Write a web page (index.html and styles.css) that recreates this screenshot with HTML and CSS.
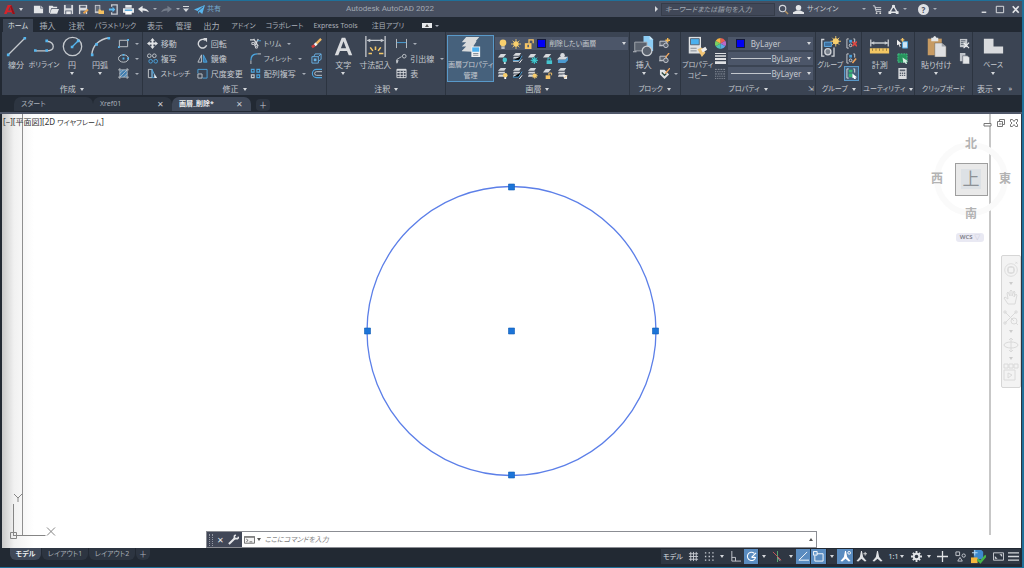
FILE: index.html
```html
<!DOCTYPE html>
<html lang="ja">
<head>
<meta charset="utf-8">
<title>Autodesk AutoCAD 2022</title>
<link rel="stylesheet" href="styles.css">
</head>
<body>
<svg class="sprite" aria-hidden="true">
  <symbol id="sheets" viewBox="0 0 24 24"><path fill="#d9dbdc" d="M7 1h15l-5 6H2zM7 7l12-1-4 6H2zM7 12l9 0-2 5H2z"/><path fill="#d9dbdc" d="M2 17.500l3-2 9 .5v2z"/></symbol>
  <symbol id="layers3" viewBox="0 0 12 12"><path fill="#d5d8dc" d="M4 0h6L8 3H1zM2 4h7L8 6H1zM2 7h7L7 9.500H1z"/></symbol>
  <symbol id="onelayer" viewBox="0 0 12 12"><path fill="#d5d8dc" d="M4 1h6L7 5H1z"/></symbol>
  <symbol id="blk" viewBox="0 0 12 12"><path fill="#59616e" stroke="#c9cdd2" d="M1 3.500h7v4.500H1z"/><circle cx="7.500" cy="8" r="2.500" fill="#59616e" stroke="#c9cdd2"/><path stroke="#c9cdd2" d="M0 8.500h4"/></symbol>
  <symbol id="annot" viewBox="0 0 12 12"><path fill="currentColor" d="M5.500 0h1l1.300 6.500L11.500 11l-2 .5L6 8.500l-3.500 3-2-.5 3.700-4.500z"/></symbol>
  <symbol id="group" viewBox="0 0 24 24"><path fill="none" stroke="#d0d3d8" stroke-width="1.500" d="M5 4H2v19h3M13 23h3V13"/><path fill="#3d6f9f" stroke="#62b0ea" d="M5 7h8v5H5z"/><circle cx="9" cy="18" r="3.500" fill="#777f8a" stroke="#d0d3d8" stroke-width="1.500"/></symbol>
  <symbol id="groupsm" viewBox="0 0 12 12"><path fill="none" stroke="#d0d3d8" d="M3 1H1v10h2M8 1h1.500v4"/><path fill="#48a0de" d="M3.500 2h3v3h-3z"/><circle cx="5" cy="8" r="1.500" fill="none" stroke="#d0d3d8"/></symbol>
</svg>

<div class="app">
<header class="titlebar">
  <div class="quick">
    <button aria-label="アプリケーション メニュー" class="logo"><svg viewBox="0 0 12 12"><path fill="#d5242b" fill-rule="evenodd" d="M4 1h4l4 10H9L8.300 9H3.700L3 11H0zM6 3 4.600 7h2.800z"/><path fill="#8f141c" d="M8 1 12 11H9.500L6.800 3z"/></svg><i class="arr"></i></button>
    <button aria-label="新規"><svg viewBox="0 0 12 12"><path fill="#e3e5e8" d="M1 2h7v3h3v5H1z"/><path fill="#b6bac1" d="M8.500 1.500 11.500 4.500h-3z"/></svg></button>
    <button aria-label="開く"><svg viewBox="0 0 12 12"><path fill="#e3e5e8" d="M1 10V2h4l1 1h4v1.500H3.500L2 9.500zM4 5.500h8L10 10.500H2z"/></svg></button>
    <button aria-label="保存"><svg viewBox="0 0 12 12"><path fill="#d9dbdf" d="M1 1h10v10H1z"/><path fill="#596273" d="M3 1h6v3.500H3zM2.500 7h7v4h-7z"/><path fill="#e8e9eb" d="M3.500 8h5v3h-5z"/></svg></button>
    <button aria-label="名前を付けて保存"><svg viewBox="0 0 12 12"><path fill="#d9dbdf" d="M1 1h9v10H1z"/><path fill="#596273" d="M2.500 2h6v2h-6zM2.500 7h6v4h-6z"/><path stroke="#e7a24e" stroke-width="2" d="m6 10 5-4"/></svg></button>
    <button aria-label="Web から開く"><svg viewBox="0 0 12 12"><path fill="#c7cad0" d="M2 1h6v9H2z"/><path fill="#636b79" d="M3 2h4v6H3z"/><path fill="#f3c061" d="M6 6h2l1 1h3v4H6z"/></svg></button>
    <button aria-label="モバイルに保存"><svg viewBox="0 0 12 12"><path fill="none" stroke="#c7cad0" stroke-width="1.500" d="M4 3V1h6v10H4V9"/><path fill="#5bb8f0" d="M1 5h4V3l3 3-3 3V7H1z"/></svg></button>
    <button aria-label="印刷"><svg viewBox="0 0 12 12"><path fill="#e7e9eb" d="M2.500 1h7v3h-7zM0 4.500h12v5H0z"/><path fill="#4da3d9" d="M2 6h8v1.500H2z"/><path fill="#fff" d="M2.500 8h7v3.500h-7z"/></svg></button>
    <button aria-label="元に戻す"><svg viewBox="0 0 12 12"><path fill="#e7e9eb" d="M0 5.500 5 2v2.500q5 0 7 4.500-3-2-7-2v2.500z"/></svg></button>
    <button aria-label="元に戻す履歴" class="narrow"><i class="arr tiny"></i></button>
    <button aria-label="やり直し"><svg viewBox="0 0 12 12"><path fill="#747c8a" d="M12 5.500 7 2v2.500q-5 0-7 4.500 3-2 7-2v2.500z"/></svg></button>
    <button aria-label="やり直し履歴" class="narrow"><i class="arr tiny"></i></button>
    <button aria-label="クイック アクセスのカスタマイズ" class="narrow custom"><svg viewBox="0 0 6 6"><path fill="#d5d8dc" d="M0 0h6v1H0zM0 2.500h6L3 6z"/></svg></button>
    <button class="share"><svg viewBox="0 0 12 12"><path fill="#58b4ec" d="M0 6 12 1 9 11 6 8.500 4.500 11V8z"/><path stroke="#474f60" d="m4 8 6-5"/></svg><span>共有</span></button>
  </div>
  <h1 class="apptitle">Autodesk AutoCAD 2022</h1>
  <div class="account">
    <i class="arr right"></i>
    <input class="search" aria-label="検索" placeholder="キーワードまたは語句を入力">
    <button aria-label="検索実行"><svg viewBox="0 0 12 12"><circle cx="5" cy="5" r="3.500" fill="none" stroke="#d4d7dc" stroke-width="1.200"/><path stroke="#b99563" stroke-width="1.500" d="m8 8 3 3"/></svg></button>
    <button class="signin"><svg viewBox="0 0 12 12"><circle cx="6" cy="4" r="3" fill="#e3e5e8"/><path fill="#e3e5e8" d="M0 11V9l4-2h4l4 2v2z"/></svg><span>サインイン</span><i class="arr tiny"></i></button>
    <button aria-label="ストア"><svg viewBox="0 0 12 12"><path fill="none" stroke="#d4d7dc" d="M1 2h2l1.500 6H10M3 4h7M4 6h6"/><circle cx="5" cy="10" r="1" fill="#ddd"/><circle cx="9" cy="10" r="1" fill="#ddd"/></svg></button>
    <button class="pair" aria-label="アプリ"><svg viewBox="0 0 12 12"><path fill="none" stroke="#e3e5e8" stroke-width="1.500" d="M6 2 2 9h8z"/><path fill="#e3e5e8" d="M4.500 1h3v3h-3zM.500 8h3v3h-3zM8.500 8h3v3h-3z"/></svg><i class="arr tiny"></i></button>
    <button class="pair help" aria-label="ヘルプ"><b>?</b><i class="arr tiny"></i></button>
    <span class="winbtns">
      <button aria-label="最小化"><svg viewBox="0 0 12 12"><path stroke="#e3e5e8" stroke-width="1.500" d="M4 9h5"/></svg></button>
      <button aria-label="最大化"><svg viewBox="0 0 12 12"><path fill="none" stroke="#e3e5e8" d="M2.500 2.500h8v7h-8z"/></svg></button>
      <button aria-label="閉じる"><svg viewBox="0 0 12 12"><path stroke="#e3e5e8" stroke-width="1.800" d="m3 2.500 6.500 7m0-7L3 9.500"/></svg></button>
    </span>
  </div>
</header>

<nav class="tabs" aria-label="リボン タブ">
  <button class="on kana">ホーム</button><button>挿入</button><button>注釈</button><button class="kana">パラメトリック</button><button>表示</button><button>管理</button><button>出力</button><button class="kana">アドイン</button><button class="kana">コラボレート</button><button class="latin">Express Tools</button><button class="kana">注目アプリ</button><button aria-label="リボンを最小化"><i class="mini"><i class="arr up"></i></i><i class="arr tiny"></i></button>
</nav>

<main class="ribbon">
  <section class="panel draw">
    <div class="body">
      <button class="big"><svg viewBox="0 0 24 24"><path stroke="#c5c9ce" stroke-width="1.500" d="M2 22 22 2"/><path fill="#55b6ef" d="M1 20h3v3H1zM20 1h3v3h-3z"/></svg><span>線分</span></button>
      <button class="big"><svg viewBox="0 0 24 24"><path fill="none" stroke="#c5c9ce" stroke-width="1.500" d="M2 17h12q8 0 8-5t-7-6"/><path fill="#55b6ef" d="M0 15h3v3H0zM13 15h3v3h-3zM13 4h3v3h-3z"/></svg><span class="kana">ポリライン</span></button>
      <button class="big"><svg viewBox="0 0 24 24"><circle cx="12" cy="12" r="10.500" fill="none" stroke="#c5c9ce" stroke-width="1.500"/><path stroke="#55b6ef" stroke-width="1.500" d="m12 12 6-6"/><path fill="#55b6ef" d="M10 11h3v3h-3zM17 4h3v3h-3z"/></svg><span>円</span><i class="arr"></i></button>
      <button class="big"><svg viewBox="0 0 24 24"><path fill="none" stroke="#c5c9ce" stroke-width="1.500" d="M2 21Q4 5 22 2"/><path fill="#55b6ef" d="M1 20h3v3H1zM6 8h3v3H6zM20 1h3v3h-3z"/></svg><span>円弧</span><i class="arr"></i></button>
      <div class="rows">
        <button aria-label="長方形"><svg viewBox="0 0 12 12"><path fill="none" stroke="#c5c9ce" d="M1.500 2.500h9v7h-9z"/><path fill="#55b6ef" d="M10 1h2v2h-2zM0 9h2v2H0z"/></svg><i class="arr tiny"></i></button>
        <button aria-label="楕円"><svg viewBox="0 0 12 12"><ellipse cx="6" cy="6" rx="5.500" ry="4" fill="none" stroke="#c5c9ce"/><path fill="#55b6ef" d="M5 5h2v2H5zM10 5h2v2h-2zM5 1h2v2H5z"/></svg><i class="arr tiny"></i></button>
        <button aria-label="ハッチング"><svg viewBox="0 0 12 12"><path fill="#3f7db0" d="M2 2h8v8H2z"/><path stroke="#c5c9ce" stroke-width=".8" d="M2 0v12M10 0v12M0 2h12M0 10h12M2 6l4-4M2 10l8-8M6 10l4-4"/></svg><i class="arr tiny"></i></button>
      </div>
    </div>
    <h2>作成<i class="arr"></i></h2>
  </section>

  <section class="panel modify">
    <div class="body cols">
      <button><svg viewBox="0 0 12 12"><path fill="#e0e2e5" d="m6 0 2.500 3H7v2h2V3.500L12 6 9 8.500V7H7v2h1.500L6 12 3.500 9H5V7H3v1.500L0 6l3-2.500V5h2V3H3.500z"/></svg><span>移動</span></button>
      <button><svg viewBox="0 0 12 12"><path fill="none" stroke="#d5d8dc" stroke-width="1.500" d="M9 2.500A4.700 4.700 0 1 0 10.500 8"/><path fill="#d5d8dc" d="M6.500 0H11v4.500z"/></svg><span>回転</span></button>
      <button><svg viewBox="0 0 12 12"><path stroke="#d5d8dc" stroke-width="1.400" d="m4 1 5 8M9 1 5 9M0 2h4"/><path fill="none" stroke="#d5d8dc" d="M6 9h2v2H6zM2 5h3v2H2z"/><path stroke="#4ba5df" d="M8 3h4"/></svg><span class="kana">トリム</span><i class="arr tiny"></i></button>
      <button aria-label="削除"><svg viewBox="0 0 12 12"><path stroke="#efb965" stroke-width="2.500" d="m5 7 6-6"/><path stroke="#f5f5f5" stroke-width="3" d="m4 8 2-2"/><path stroke="#d6403c" stroke-width="3" d="m1 10 3-2"/></svg></button>
      <button><svg viewBox="0 0 12 12"><g fill="none" stroke="#c5c9ce"><circle cx="2.500" cy="3" r="2"/><circle cx="8" cy="3" r="2"/></g><g fill="none" stroke="#4ba5df"><circle cx="4" cy="9" r="2"/><circle cx="9.500" cy="9" r="2"/></g></svg><span>複写</span></button>
      <button><svg viewBox="0 0 12 12"><path fill="none" stroke="#c5c9ce" d="M5 2v8H1z"/><path fill="#3b78a8" stroke="#4ba5df" d="M7 2v8h4z"/></svg><span>鏡像</span></button>
      <button><svg viewBox="0 0 12 12"><path fill="none" stroke="#c5c9ce" d="M1 12V8M8 1h4"/><path fill="none" stroke="#4ba5df" stroke-width="1.400" d="M1 8q0-7 7-7"/></svg><span class="kana">フィレット</span><i class="arr tiny"></i></button>
      <button aria-label="分解"><svg viewBox="0 0 12 12"><path fill="none" stroke="#6ab4e8" d="M1 4h7v7H1zM3 4l1.500-3H11v6L8 9M8 4l3-3"/><path fill="#6ab4e8" d="M3 6h3v3H3z"/></svg></button>
      <button><svg viewBox="0 0 12 12"><path fill="none" stroke="#c5c9ce" d="M1.500 1.500h4v9h-4z"/><path fill="none" stroke="#4ba5df" d="M5.500 1.500 8 7v3.500H5.500z"/><path fill="#e6e7e9" d="m8 6 3 5H8z"/></svg><span class="kana">ストレッチ</span></button>
      <button><svg viewBox="0 0 12 12"><path fill="none" stroke="#4ba5df" d="M1 6V1.500h10V11H6"/><path fill="none" stroke="#c5c9ce" d="M1 6.500h4.500V11H1z"/></svg><span>尺度変更</span></button>
      <button><svg viewBox="0 0 12 12"><g fill="none" stroke="#4ba5df" stroke-width="1.200"><path d="M1.500 1.500h3v3h-3zM7.500 1.500h3v3h-3zM7.500 7.500h3v3h-3z"/><path stroke="#c5c9ce" d="M1.500 7.500h3v3h-3z"/></g></svg><span>配列複写</span><i class="arr tiny"></i></button>
      <button aria-label="オフセット"><svg viewBox="0 0 12 12"><path fill="none" stroke="#4ba5df" stroke-width="1.200" d="M12 1.500H6a4.500 4.500 0 0 0 0 9h6"/><path fill="none" stroke="#c5c9ce" d="M12 4H6a2 2 0 0 0 0 4h6"/></svg></button>
    </div>
    <h2>修正<i class="arr"></i></h2>
  </section>

  <section class="panel annotate">
    <div class="body">
      <button class="big"><svg viewBox="0 0 24 24"><path fill="#d9dbde" fill-rule="evenodd" d="M10 2h4l8 20h-4l-2-5H8l-2 5H2zM9 14h6l-3-8z"/></svg><span>文字</span><i class="arr"></i></button>
      <button class="big wide"><svg viewBox="0 0 24 24"><path stroke="#c5c9ce" stroke-width="1.500" d="M1 0v24M23 0v24M3 5h18"/><path fill="#c5c9ce" d="m2 5 4-2v4zM22 5l-4-2v4z"/><path stroke="#f2c667" stroke-width="1.800" d="M12 12v4M6 13l3 4M18 13l-3 4M4 20h4M16 20h5"/></svg><span>寸法記入</span></button>
      <div class="rows">
        <button aria-label="長さ寸法"><svg viewBox="0 0 12 12"><path stroke="#c5c9ce" d="M.500 1v10M11.500 1v10"/><path stroke="#4ba5df" d="M1 5h10"/></svg><i class="arr tiny"></i></button>
        <button><svg viewBox="0 0 12 12"><path fill="none" stroke="#c5c9ce" d="M1 11V7l5-3"/><circle cx="9" cy="3.500" r="2" fill="none" stroke="#c5c9ce"/><path fill="#c5c9ce" d="M0 8h3l-2 4z"/></svg><span>引出線</span><i class="arr tiny"></i></button>
        <button><svg viewBox="0 0 12 12"><path fill="#3b4453" stroke="#d5d8dc" d="M1 1.500h10v9H1zM1 5h10M1 8h10M4.500 3v8M8 3v8"/><path fill="#d5d8dc" d="M1 1h10v2H1z"/></svg><span>表</span></button>
      </div>
    </div>
    <h2>注釈<i class="arr"></i></h2>
  </section>

  <section class="panel layerpanel">
    <div class="body">
      <button class="big active"><svg viewBox="0 0 24 24"><use href="#sheets"/><path fill="#f1f2f3" d="M13 12h10v12H13z"/><path fill="#4bb0ef" d="M14 13h8v5h-8z"/><path stroke="#7b828b" d="M15 20h6m-6 2h6"/></svg><span class="kana">画層プロパティ<br>管理</span></button>
      <div class="layerbox">
        <div class="combo">
          <svg viewBox="0 0 12 12"><circle cx="6" cy="4.500" r="4" fill="#f8cf6e"/><path fill="#f8cf6e" d="M4 7h4v2H4z"/><path fill="#b8bcc4" d="M4 9h4v3H4z"/></svg>
          <svg viewBox="0 0 12 12"><circle cx="6" cy="6" r="3.200" fill="#f8cf6e"/><path stroke="#f8cf6e" d="M6 0v12M0 6h12M2 2l8 8M10 2l-8 8"/></svg>
          <svg viewBox="0 0 12 12"><path fill="#f8c666" d="M1 5h8v7H1z"/><path fill="none" stroke="#f8c666" stroke-width="1.500" d="M6 5V1h5v4"/><path fill="#59616e" d="M4 7h2v3H4z"/></svg>
          <i class="swatch"></i>
          <select aria-label="現在の画層" class="kana"><option>削除したい画層</option></select><i class="arr"></i>
        </div>
        <div class="icongrid">
          <button aria-label="非表示"><svg viewBox="0 0 12 12"><use href="#onelayer"/><circle cx="8.500" cy="7.500" r="2.500" fill="#45c5cf"/><path fill="#d6e9ea" d="M7.500 10h2v2h-2z"/></svg></button>
          <button aria-label="選択表示"><svg viewBox="0 0 12 12"><use href="#layers3"/><path stroke="#4ba5df" d="M1 8h7l3-5"/><path stroke="#fff" d="m8 11 3-4"/></svg></button>
          <button aria-label="フリーズ"><svg viewBox="0 0 12 12"><use href="#onelayer"/><circle cx="8" cy="8" r="3" fill="#278d93"/><path stroke="#46cfd5" d="M8 4v8M4 8h8M5 5l6 6M11 5l-6 6"/></svg></button>
          <button aria-label="ロック"><svg viewBox="0 0 12 12"><use href="#onelayer"/><path fill="#45c5cf" d="M5 8h6v4H5z"/><path fill="none" stroke="#45c5cf" d="M6.500 8V5.500h3V8"/></svg></button>
          <button aria-label="現在層に設定"><svg viewBox="0 0 12 12"><path fill="#4b9ad0" d="M1 7h8l3-3v4l-3 3H1z"/><path fill="#d5d8dc" d="M3 4h9L9 7H0z"/><circle cx="6" cy="2.500" r="2.500" fill="#d9dbde"/></svg></button>
          <button aria-label="全画層表示"><svg viewBox="0 0 12 12"><use href="#layers3"/><circle cx="9" cy="8" r="2.500" fill="#f8cf6e"/><path fill="#fff" d="M8 10h2v2H8z"/></svg></button>
          <button aria-label="選択表示解除"><svg viewBox="0 0 12 12"><use href="#layers3"/><path stroke="#4ba5df" d="M1 10h6l4-6"/><path stroke="#fff" d="m8 12 3-4"/></svg></button>
          <button aria-label="フリーズ解除"><svg viewBox="0 0 12 12"><use href="#layers3"/><circle cx="8.500" cy="8.500" r="2.200" fill="#f8cf6e"/><path stroke="#f8cf6e" stroke-width=".7" d="M8.500 5v7M5 8.500h7M6 6l5 5M11 6l-5 5"/></svg></button>
          <button aria-label="ロック解除"><svg viewBox="0 0 12 12"><use href="#onelayer"/><path fill="#f8c666" d="M4 8h5v4H4z"/><path fill="none" stroke="#f8c666" d="M7.500 8V5.500h3V8"/></svg></button>
          <button aria-label="画層一致"><svg viewBox="0 0 12 12"><use href="#layers3"/><path fill="#eee" d="m6 7 5 1v4H8z"/><path stroke="#efb965" d="m8 11 3-3"/></svg></button>
        </div>
      </div>
    </div>
    <h2>画層<i class="arr"></i></h2>
  </section>

  <section class="panel block">
    <div class="body">
      <button class="big"><svg viewBox="0 0 24 24"><path fill="#8dcdf5" d="M12 0h7l4 4v13H12z"/><path fill="#cfe9fa" d="M19 0v4h4z"/><path fill="#5a626e" stroke="#a9aeb5" d="M2 7h14v10H2z"/><circle cx="16" cy="17" r="5.500" fill="#5a626e" stroke="#c9cdd2" stroke-width="1.500"/><path stroke="#c9cdd2" d="M0 18h4"/></svg><span>挿入</span><i class="arr"></i></button>
      <div class="rows">
        <button aria-label="ブロック作成"><svg viewBox="0 0 12 12"><use href="#blk"/><path stroke="#f4ba56" stroke-width="1.500" d="M9.500 0v5M7 2.500h5"/></svg></button>
        <button aria-label="ブロック編集"><svg viewBox="0 0 12 12"><use href="#blk"/><path stroke="#efa55c" stroke-width="1.500" d="m7 5 4-5"/></svg></button>
        <button aria-label="属性編集"><svg viewBox="0 0 12 12"><path fill="#e0e2e5" d="M1 2h5l5 5-5 5-5-5z"/><path fill="none" stroke="#2e4a40" stroke-width="1.500" d="m3 5 3 3 2-2"/><path stroke="#efa55c" stroke-width="1.500" d="m7 6 5-6"/></svg><i class="arr tiny"></i></button>
      </div>
    </div>
    <h2><span class="kana">ブロック</span><i class="arr"></i></h2>
  </section>

  <section class="panel props">
    <div class="body">
      <button class="big"><svg viewBox="0 0 24 24"><path fill="#dfe1e3" d="M2 1h14v19H2z"/><path fill="#4bb0ef" stroke="#555d69" d="M4 3h10v7H4z"/><path stroke="#7b828b" d="M4 14h7m-7 3h7"/><path fill="#f0c474" d="m12 15 5-2 4 6-4 5z"/><path stroke="#eee" stroke-width="4" d="m17 17 5-3"/></svg><span class="kana">プロパティ<br>コピー</span></button>
      <div class="proprows">
        <svg viewBox="0 0 12 12"><path fill="#ec5d4f" d="M6 6V0a6 6 0 0 1 5.200 3z"/><path fill="#b869c7" d="m6 6 5.200-3a6 6 0 0 1 0 6z"/><path fill="#5aa9e6" d="m6 6 5.200 3A6 6 0 0 1 6 12z"/><path fill="#4cc2b4" d="M6 6v6A6 6 0 0 1 .800 9z"/><path fill="#79cf60" d="M6 6 .800 9a6 6 0 0 1 0-6z"/><path fill="#f6b545" d="M6 6 .800 3A6 6 0 0 1 6 0z"/></svg>
        <label class="combo"><i class="swatch"></i><select aria-label="色"><option>ByLayer</option></select><i class="arr"></i></label>
        <svg viewBox="0 0 12 12"><path fill="#dfe1e4" d="M0 0h12v1H0zM0 2.500h12v1.500H0zM0 5.500h12v2H0zM0 9h12v3H0z"/></svg>
        <label class="combo"><i class="rule"></i><select aria-label="線の太さ"><option>ByLayer</option></select><i class="arr"></i></label>
        <svg viewBox="0 0 12 12"><path stroke="#8f96a1" stroke-dasharray="2 1" d="M0 1.500h12M0 6.500h12"/><path stroke="#8f96a1" stroke-dasharray="1 1" d="M0 4h12M0 9h12M0 11.500h12"/></svg>
        <label class="combo"><i class="rule"></i><select aria-label="線種"><option>ByLayer</option></select><i class="arr"></i></label>
      </div>
    </div>
    <h2><span class="kana">プロパティ</span><i class="arr"></i><button class="launch" aria-label="プロパティ パレット">⇲</button></h2>
  </section>

  <section class="panel grp">
    <div class="body">
      <button class="big"><svg viewBox="0 0 24 24"><use href="#group"/><circle cx="18" cy="6" r="3.500" fill="#f8cf6e"/><path stroke="#f8cf6e" d="M18 0v12M12 6h12M14 2l8 8M22 2l-8 8"/></svg><span class="kana">グループ</span></button>
      <div class="rows">
        <button aria-label="グループ解除"><svg viewBox="0 0 12 12"><use href="#groupsm"/><path stroke="#e14842" stroke-width="1.800" d="m7 4 5 5m0-5-5 5"/></svg></button>
        <button aria-label="グループ編集"><svg viewBox="0 0 12 12"><use href="#groupsm"/><path stroke="#efa55c" stroke-width="1.800" d="m7 11 4-5"/></svg></button>
        <button aria-label="グループ選択" class="active"><svg viewBox="0 0 12 12"><path fill="none" stroke="#e0e2e5" d="M3 1H1v10h2M8 1h1.500v4"/><path fill="#37b677" d="M3 2h4v3H3zM3 6h4v4H3z"/><path fill="#fff" d="m7 6 5 4-2 .5 1 1.500H9L8 10.500 7 11z"/></svg></button>
      </div>
    </div>
    <h2><span class="kana">グループ</span><i class="arr"></i></h2>
  </section>

  <section class="panel util">
    <div class="body">
      <button class="big"><svg viewBox="0 0 24 24"><path stroke="#c5c9ce" stroke-width="1.500" d="M2 4v8M22 4v8M3 8h18"/><path fill="#c5c9ce" d="m2 8 4-2v4zM22 8l-4-2v4z"/><path fill="#f3c763" d="M1 14h22v6H1z"/><path stroke="#967b3e" d="M4 14v3M8 14v3M12 14v3M16 14v3M20 14v3"/></svg><span>計測</span><i class="arr"></i></button>
      <div class="rows">
        <button aria-label="クイック選択"><svg viewBox="0 0 12 12"><path fill="#cfe5f5" stroke="#4ba5df" d="M6 4h5.500v7H6z"/><path fill="#eee" d="m0 2 5 4-2 .5 1 3-1 .5-1-3-2 1z"/><path stroke="#f4c466" stroke-width="1.500" d="M6 0v4M4 2h4"/></svg></button>
        <button aria-label="すべて選択"><svg viewBox="0 0 12 12"><path fill="#26935c" stroke="#45c98a" stroke-dasharray="2 1" d="M1 1h10v9H1z"/><path fill="#d8eee3" d="m6 5 6 4-2 .5 1 2.500H9.500L8.500 10 7 11z"/></svg></button>
        <button aria-label="計算機"><svg viewBox="0 0 12 12"><path fill="#d9dbde" d="M1.500 0h9v12h-9z"/><path fill="#59616e" d="M3 1.500h6v2H3zM3 5h1.500v1.500H3zM5.300 5h1.500v1.500H5.300zM7.600 5H9v1.500H7.600zM3 7.300h1.500v1.500H3zM5.300 7.300h1.500v1.500H5.300zM7.600 7.300H9v1.500H7.600z"/></svg></button>
      </div>
    </div>
    <h2><span class="kana">ユーティリティ</span><i class="arr"></i></h2>
  </section>

  <section class="panel clip">
    <div class="body">
      <button class="big"><svg viewBox="0 0 24 24"><path fill="#c79b63" d="M2 3h16v19H2z"/><path fill="#e3e5e7" d="M6 2h2q2-4 4 0h2v4H6z"/><path fill="#dedfe1" stroke="#5b5346" stroke-width=".5" d="M10 8h8l5 4v12H10z"/><path fill="#9da2a9" d="M18 8v4h5z"/></svg><span>貼り付け</span><i class="arr"></i></button>
      <div class="rows">
        <button aria-label="切り取り"><svg viewBox="0 0 12 12"><path fill="#c3c7cc" d="M1 1h8v9H1z"/><path stroke="#59616e" d="M2 3h5M2 5h4M2 7h3"/><path stroke="#f0f1f2" stroke-width="1.200" d="m5 5 6 6m0-6-6 6"/></svg></button>
        <button aria-label="コピー"><svg viewBox="0 0 12 12"><path fill="#bfc3c9" d="M1 0h6v9H1z"/><path fill="#e3e5e7" stroke="#59616e" stroke-width=".7" d="M4 3h5l2.500 2v7H4z"/></svg></button>
      </div>
    </div>
    <h2><span class="kana">クリップボード</span></h2>
  </section>

  <section class="panel view">
    <div class="body">
      <button class="big"><svg viewBox="0 0 24 24"><path fill="#d9dbde" d="M1 3h11v9h11v8H1z"/></svg><span class="kana">ベース</span><i class="arr"></i></button>
    </div>
    <h2>表示<i class="arr"></i><button class="launch" aria-label="表示設定">»</button></h2>
  </section>
</main>

<nav class="files" aria-label="ファイル タブ">
  <div class="file"><a href="#start">スタート</a></div>
  <div class="file"><a href="#xref">Xref01</a><button aria-label="Xref01 を閉じる">✕</button></div>
  <div class="file on"><a href="#layer-del">画層_削除*</a><button aria-label="画層_削除 を閉じる">✕</button></div>
  <button class="add" aria-label="新規タブ">＋</button>
</nav>

<section class="canvas">
  <svg class="drawing" viewBox="0 0 1020 434" aria-label="図面">
    <path stroke="#8f8f8f" d="M20.500 0v421M988 0v421"/>
    <circle cx="509.500" cy="217" r="144.500" fill="none" stroke="#5c7fe8" stroke-width="1.300"/>
    <g fill="#1c74d8" stroke="#0f5db5" stroke-width=".6"><path d="M506.500 70h6v6h-6zM362.500 214h6v6h-6zM506.500 214h6v6h-6zM650.500 214h6v6h-6zM506.500 358h6v6h-6z"/></g>
    <g fill="none" stroke="#858585"><path d="M8.500 418.500h6v6h-6zM11.500 422v-32M11.500 421.500h32M12 380l4 4 4-4M16 384v4M45 413.500l8 8m0-8-8 8"/></g>
  </svg>
  <div class="viewlabel">[−][平面図][2D <span class="kana">ワイヤフレーム</span>]</div>
  <div class="viewbtns">
    <button aria-label="最小化"><svg viewBox="0 0 10 10"><path fill="#fff" stroke="#777" d="M1 5.500h7v2.500H1z"/></svg></button>
    <button aria-label="復元"><svg viewBox="0 0 10 10"><path fill="none" stroke="#777" d="M1.500 3.500h5v5h-5zM3.500 3V1.500h5v5H7M3 6h2.500"/></svg></button>
    <button aria-label="閉じる"><svg viewBox="0 0 10 10"><path fill="none" stroke="#777" d="M1.500 1.500h2L5 3.500l1.500-2h2v2L7 5l1.500 1.500v2h-2L5 6.500l-1.500 2h-2v-2L3 5 1.500 3.500z"/></svg></button>
  </div>
  <div class="cube">
    <i class="ring"></i>
    <button class="n">北</button><button class="w">西</button><button class="face"><span>上</span></button><button class="e">東</button><button class="s">南</button>
  </div>
  <button class="wcs">WCS <span>▽</span></button>
  <div class="navbar">
    <button aria-label="ホイール"><svg viewBox="0 0 16 20"><circle cx="8" cy="10" r="7"/><path d="M5 7h6v6H5z"/><circle cx="8" cy="10" r="4"/><path d="M13 1l2 2m0-2-2 2"/></svg></button><i class="arr"></i>
    <button aria-label="画面移動"><svg viewBox="0 0 16 16"><path d="M5 15 1 9l1-1 3 2-1-6 1-1 2 4V2l1-1 1 1v5l2-5 1 1-1 5 2-3 1 1-2 9z"/></svg></button>
    <button aria-label="ズーム"><svg viewBox="0 0 16 16"><path d="m2 2 9 9M13 2 2 13M1 1h2v2H1zM12 1h2v2h-2zM1 12h2v2H1zM13 13l2 2"/><circle cx="11" cy="11" r="3"/></svg></button><i class="arr"></i>
    <button aria-label="オービット"><svg viewBox="0 0 16 16"><path d="M8 1v14M6 3l2-2 2 2M6 13l2 2 2-2"/><ellipse cx="8" cy="8" rx="7" ry="3"/></svg></button><i class="arr"></i>
    <button aria-label="ショーモーション"><svg viewBox="0 0 16 18"><path d="M1 1h4v4H1zM6 1h4v4H6zM11 1h4v4h-4zM1 7h11v10H1zM5 10l4 2-4 3z"/></svg></button>
  </div>
  <form class="command">
    <div class="grip"><i class="dots"></i><button type="button" aria-label="閉じる">✕</button><button type="button" aria-label="カスタマイズ"><svg viewBox="0 0 12 12"><path stroke="#e6e7ea" stroke-width="2.200" d="m1 11 7-7"/><path fill="none" stroke="#e6e7ea" stroke-width="1.800" d="M7 1.500v3.500h4M7 2l1.500-1M11 5l.5-2"/></svg></button></div>
    <button type="button" class="prompt" aria-label="最近使用したコマンド"><svg viewBox="0 0 12 10"><path fill="#f5f5f5" stroke="#666" d="M.500 1.500h11v7H.500zM2.500 4l2 1.500-2 1.500M6 7h3"/><path fill="#777" d="M0 1h12v1.500H0z"/></svg><i class="arr"></i></button>
    <input class="kana" aria-label="コマンド" placeholder="ここにコマンドを入力">
    <button type="button" class="expand" aria-label="履歴"><i class="arr up"></i></button>
  </form>
</section>

<footer class="status">
  <nav class="layouts"><button class="on kana">モデル</button><button class="kana">レイアウト1</button><button class="kana">レイアウト2</button><button class="plus" aria-label="新規レイアウト">＋</button></nav>
  <div class="modes">
    <button class="kana">モデル</button>
    <button aria-label="グリッド"><svg viewBox="0 0 12 12"><path stroke="#c9cdd3" d="M3 1v10M6 1v10M9 1v10M1 3h10M1 6h10M1 9h10"/></svg></button>
    <button aria-label="スナップ"><svg viewBox="0 0 12 12"><path stroke="#c9cdd3" stroke-width="1.500" stroke-dasharray="1.500 2.500" d="M1 2h11M1 6h11M1 10h11"/></svg></button>
    <button aria-label="スナップ設定"><i class="arr"></i></button>
    <button aria-label="直交"><svg viewBox="0 0 12 12"><path fill="none" stroke="#c9cdd3" d="M2 0v11h10M2 7h4v4"/></svg></button>
    <button aria-label="極トラッキング" class="hl"><svg viewBox="0 0 12 12"><path fill="none" stroke="#fff" stroke-width="1.200" d="M9 2.500a4.500 4.500 0 1 0 1.500 4M6 7l5-5M6 7h4"/></svg></button>
    <button aria-label="極トラッキング設定"><i class="arr"></i></button>
    <button aria-label="アイソメ"><svg viewBox="0 0 12 12"><path stroke="#58af72" d="M6 0v12"/><path stroke="#cf5758" d="m1 1 9 9"/><path stroke="#aaa" d="m6 7 3 4"/></svg></button>
    <button aria-label="アイソメ設定"><i class="arr"></i></button>
    <button aria-label="オブジェクト スナップ トラッキング" class="hl"><svg viewBox="0 0 12 12"><path fill="none" stroke="#fff" d="M10 1 1 10h11"/></svg></button>
    <button aria-label="オブジェクト スナップ" class="hl"><svg viewBox="0 0 12 12"><path fill="none" stroke="#fff" d="M3 3h8v8H2V5"/><path fill="#6c9ed0" stroke="#fff" d="M.500.500h4v4h-4z"/></svg></button>
    <button aria-label="スナップ種類"><i class="arr"></i></button>
    <button aria-label="注釈表示" class="hl"><svg viewBox="0 0 12 12"><use href="#annot"/><circle cx="10" cy="2" r="1.500" fill="none" stroke="#fff"/></svg></button>
    <button aria-label="自動尺度"><svg viewBox="0 0 12 12"><use href="#annot"/><path stroke="#ddd" d="M10 1v4M8 3h4"/></svg></button>
    <button aria-label="注釈"><svg viewBox="0 0 12 12"><use href="#annot"/></svg></button>
    <button class="latin">1:1<i class="arr"></i></button>
    <button aria-label="ワークスペース"><svg viewBox="0 0 12 12"><circle cx="6" cy="6" r="3" fill="none" stroke="#e1e3e6" stroke-width="2"/><path stroke="#e1e3e6" stroke-width="2" d="M6 0v3M6 9v3M0 6h3M9 6h3M2 2l2 2M8 8l2 2M10 2 8 4M4 8l-2 2"/></svg></button>
    <button aria-label="ワークスペース設定"><i class="arr"></i></button>
    <button aria-label="注釈モニター"><svg viewBox="0 0 12 12"><path stroke="#e1e3e6" stroke-width="1.400" d="M6 0v12M0 6h12"/></svg></button>
    <button aria-label="選択表示"><svg viewBox="0 0 12 12"><g fill="none" stroke="#c9cdd3"><path d="M1 1h4v4H1zM5.500 7 8 11H3z"/><circle cx="9.500" cy="5" r="1.800"/></g></svg></button>
    <button aria-label="グラフィックス"><svg viewBox="0 0 16 16" class="gfx"><path fill="#3e8ace" d="M3 1h8l2 2v8H3z"/><path stroke="#bfe0fa" d="M1 4h6M4 1v6"/><path fill="#f6b73c" d="M0 9h7v6H0z"/><path fill="none" stroke="#47b649" stroke-width="2.500" d="m7 11 3 3 6-7"/></svg></button>
    <button aria-label="フルスクリーン"><svg viewBox="0 0 12 12"><path fill="none" stroke="#d4d7dc" d="M.500 2h11v8H.500z"/><path fill="#d4d7dc" d="M7 3.500h3v3zM2 5.500v3h3z"/></svg></button>
    <button aria-label="カスタマイズ"><svg viewBox="0 0 12 12"><path stroke="#d4d7dc" stroke-width="1.500" d="M0 2h12M0 6h12M0 10h12"/></svg></button>
  </div>
</footer>
</div>
</body>
</html>
```
FILE: styles.css
```css
* { box-sizing: border-box; }
body {
  margin: 0;
  background: #1d5876;
  color: #c6cad0;
  font: 8px/10px "Noto Sans", "Noto Sans CJK JP", sans-serif;
  font-feature-settings: "palt";
}
button, input, select {
  margin: 0; padding: 0; border: 0; background: none;
  color: inherit; font: inherit; font-feature-settings: inherit;
}
h1, h2 { margin: 0; font: inherit; }
a { color: inherit; text-decoration: none; }
svg { display: block; flex: none; }
.sprite { position: absolute; width: 0; height: 0; }
.kana, .latin { font-size: 7px; }

.app {
  display: flex; flex-direction: column;
  height: 100vh;
  border: solid #1f7099;
  border-width: 1px 2px 1px 0;
  background: #222933;
}

.arr {
  display: block; flex: none;
  width: 0; height: 0;
  border: solid transparent;
  border-width: 3px 2px 0;
  border-top-color: #d5d8dc;
}
.arr.tiny { border-width: 2px 2px 0; border-top-color: #a7adb7; }
.arr.up { border-color: transparent transparent #555; border-width: 0 2px 3px; }
.arr.right { border-color: transparent transparent transparent #d5d8dc; border-width: 3px 0 3px 3px; }

/* title bar */
.titlebar {
  display: grid; grid-template-columns: auto 125fr auto 221fr auto;
  align-items: center;
  height: 16px; flex: none;
  background: #474f60;
}
.titlebar svg { width: 11px; height: 11px; }
.quick, .account { display: flex; align-items: center; }
.quick button { display: flex; justify-content: center; align-items: center; width: 15px; height: 16px; }
.quick .logo { width: 27px; gap: 4px; margin-right: 4px; }
.quick .narrow { width: 8px; }
.quick .custom { margin-right: 4px; }
.custom svg { width: 6px; height: 6px; }
.quick .share { width: auto; gap: 2px; color: #75a9cc; font-size: 7px; }
.apptitle { grid-column: 3; color: #a2a8b3; font-family: Roboto, sans-serif; }
.account { grid-column: 5; }
.search {
  width: 114px; height: 13px;
  margin: 0 3px; padding: 0 3px;
  border: 1px solid #353c49; background: #414858;
  font-size: 7px; font-style: italic;
}
::placeholder { color: #a2a8b3; opacity: 1; }
.account .signin { display: flex; align-items: center; gap: 3px; width: 73px; margin: 0 6px 0 4px; font-size: 7px; }
.signin .arr { margin-left: auto; }
.pair { display: flex; align-items: center; gap: 4px; margin-left: 5px; }
.help { margin-left: 11px; }
.help b { width: 11px; height: 11px; border-radius: 50%; background: #dfe1e4; color: #474f60; line-height: 11px; text-align: center; }
.winbtns { display: flex; gap: 5px; margin: 0 1px 0 41px; }

/* ribbon tabs */
.tabs {
  display: grid;
  grid-template-columns: 30px 29px 29px 49px 30px 27px 29px 35px 47px 55px 50px 34px;
  flex: none; height: 15px;
  padding: 2px 0 0 3px;
  color: #aab0b9;
}
.tabs button { white-space: nowrap; }
.tabs .on { background: #3b4453; color: #dfe1e4; }
.tabs button:last-child { display: flex; align-items: center; justify-content: center; gap: 3px; }
.mini { display: flex; justify-content: center; align-items: center; width: 10px; height: 5px; background: #e6e8eb; }

/* ribbon */
.ribbon {
  display: grid;
  grid-template-columns: 141fr 185fr 119fr 184fr 51fr 136fr 46fr 53fr 58fr 49fr;
  flex: none;
  margin-left: 2px;
}
.panel {
  display: flex; flex-direction: column;
  min-width: 0; height: 63px;
  padding-top: 3px;
  background: #3b4453;
  border-right: 1px solid #2c3440;
}
.body { display: flex; flex: none; height: 48px; }
.panel h2 { display: flex; justify-content: center; align-items: center; gap: 4px; height: 12px; position: relative; white-space: nowrap; }
.launch { position: absolute; right: 1px; font-size: 7px; }
.view .launch { right: 9px; }
.view h2 { padding-right: 16px; }
.big {
  display: flex; flex-direction: column; align-items: center;
  flex: none; width: 28px;
  padding-top: 1px;
  line-height: 11px; white-space: nowrap;
}
.big svg { width: 21px; height: 21px; margin-bottom: 2px; }
.big .arr { margin-top: 2px; }
.active { background: #46617c; outline: 1px solid #5999c9; outline-offset: -1px; }
.rows { display: flex; flex-direction: column; padding-top: 1px; }
.rows button, .cols button { display: flex; align-items: center; gap: 3px; height: 15px; white-space: nowrap; }
.rows svg, .cols svg, .icongrid svg, .proprows svg { width: 11px; height: 11px; }
.rows .arr, .cols .arr { margin-left: 3px; }

.draw .rows { margin-left: 4px; }
.cols { display: grid; grid-template-columns: 50px 53px 61px 14px; grid-auto-rows: 15px; padding: 1px 0 0 4px; }
.annotate .body { padding-left: 2px; }
.annotate .wide { width: 34px; margin: 0 4px 0 1px; }
.layerpanel .big { width: 47px; height: 47px; margin-left: 1px; }
.layerbox { flex: 1; min-width: 0; padding: 2px 1px 0; }
.combo { display: flex; align-items: center; gap: 3px; height: 13px; padding: 0 2px 0 3px; background: #4c5669; min-width: 0; }
.combo svg { width: 10px; height: 10px; }
.combo select { flex: 1; min-width: 0; height: 12px; appearance: none; outline: 0; }
.swatch { flex: none; width: 9px; height: 9px; background: #0000f5; border: 1px solid #151b3a; }
.rule { flex: 1; height: 1px; background: #c3c7cd; }
.icongrid { display: grid; grid-template-columns: repeat(5, 15px); grid-auto-rows: 15px; align-items: center; padding: 1px 0 0 2px; }
.block .rows { margin-left: 1px; }
.block .rows button { gap: 1px; }
.props .big { width: 34px; }
.proprows { display: grid; grid-template-columns: 11px minmax(0, 1fr); gap: 2px; flex: 1; align-items: center; align-content: start; padding: 2px 2px 0 0; min-width: 0; }
.props .combo { gap: 0; }
.props .combo .swatch { margin: 0 6px 0 5px; }
.props .rule + select { flex: 0 0 36px; }
.grp .rows button { width: 15px; justify-content: center; }
.util .big { margin-left: 3px; width: 29px; }
.util .rows { margin-left: 3px; }
.clip .big { margin-left: 5px; width: 32px; }
.clip .rows { margin-left: 7px; }
.view .big { margin-left: 6px; }

/* file tabs */
.files { display: flex; flex: none; align-items: flex-end; height: 19px; padding: 0 0 1px 14px; border-bottom: 2px solid #50586a; }
.file {
  display: flex; align-items: center; justify-content: space-between;
  width: 79px; height: 14px;
  padding: 0 8px 0 7px;
  background: #2d3541;
  border-radius: 7px 7px 0 0;
  color: #a9afb8;
  font-size: 7px;
}
.file.on { background: #3f4858; color: #eceef0; font-weight: 600; }
.file button { font-size: 8px; color: #c6cad0; font-weight: 400; }
.add { width: 14px; height: 12px; margin-left: 5px; background: #2d3541; border-radius: 4px; }

/* drawing area */
.canvas {
  position: relative; flex: 1; min-height: 0;
  margin-left: 2px;
  background: linear-gradient(90deg, #c9c9c9, #f1f1f1 12px, #fff 32px);
  border-right: 1px solid #2c3440;
}
.drawing { width: calc(100% + 1px); height: 100%; }
.viewlabel { position: absolute; left: 1px; top: 3px; color: #333; }
.viewbtns { position: absolute; right: 2px; top: 4px; display: flex; gap: 3px; }
.viewbtns svg { width: 10px; height: 10px; }
.cube {
  position: absolute; right: 7px; top: 21px;
  display: grid; grid-template-columns: 18px 50px 18px; grid-template-rows: 18px 52px 18px;
  place-items: center; isolation: isolate;
  color: #b3b3b3; font-size: 12px; font-weight: 700;
}
.cube .n, .cube .s { grid-column: 2; }
.cube .w { grid-column: 1; grid-row: 2; }
.cube .e { grid-column: 3; grid-row: 2; }
.cube .s { grid-row: 3; }
.face { grid-column: 2; grid-row: 2; display: grid; place-items: center; width: 33px; height: 33px; border: 1px solid #9e9e9e; background: #e9e9e9; color: #8d9196; }
.face span { width: 20px; height: 20px; background: #dde1e5; font-size: 17px; line-height: 20px; font-weight: 400; }
.ring { position: absolute; z-index: -1; left: 6px; top: 7px; width: 74px; height: 74px; border: 6px solid #fafafa; border-radius: 50%; }
.wcs { position: absolute; right: 37px; top: 119px; width: 28px; height: 9px; border-radius: 3px; background: #e9e9f3; color: #7d7d87; font-size: 6px; line-height: 9px; font-weight: 600; }
.wcs span { color: #c7c7d4; }
.navbar {
  position: absolute; right: 0; top: 141px;
  display: flex; flex-direction: column; align-items: center; gap: 3px;
  width: 20px; height: 133px; padding-top: 5px;
  border: 1px solid #d6d6d6; border-radius: 2px; background: #f3f3f3;
}
.navbar svg { width: 16px; height: 18px; fill: none; stroke: #dadada; }
.navbar .arr { border-top-color: #ccc; }
.command {
  position: absolute; left: 20%; right: 20%; bottom: 0;
  display: flex; align-items: center;
  height: 17px;
  border: 1px solid #8b8d93; background: #fff;
}
.grip { display: flex; align-items: center; gap: 4px; align-self: stretch; padding: 0 3px 0 2px; background: #414757; color: #e6e7ea; }
.grip svg { width: 11px; height: 11px; }
.dots { width: 4px; height: 12px; border: dotted #9498a3; border-width: 0 1px; }
.prompt { display: flex; align-items: center; gap: 2px; margin-left: 2px; }
.prompt svg { width: 11px; height: 10px; }
.prompt .arr { border-top-color: #555; }
.command input { flex: 1; min-width: 0; padding-left: 4px; font-style: italic; color: #333; outline: 0; }
.command ::placeholder { color: #7d7d7d; }
.expand { padding: 0 3px; }

/* status bar */
.status { display: flex; justify-content: space-between; flex: none; height: 19px; }
.layouts { display: flex; align-items: flex-start; padding-left: 10px; gap: 1px; color: #a9afb8; }
.layouts button { width: 46px; height: 12px; background: #2d3541; border-radius: 0 0 6px 6px; line-height: 12px; white-space: nowrap; }
.layouts .on { width: 31px; background: #3f4858; color: #eceef0; font-weight: 600; }
.layouts .plus { width: 14px; }
.modes {
  display: grid;
  grid-template-columns: 24px 16px 16px 9px 18px 15px 10px 16px 11px 15px 16px 10px 17px 15px 16px 23px 17px 8px 19px 16px 21px 18px 13px;
  align-items: center;
  margin: 0 2px 2px 0;
}
.modes button { display: flex; align-items: center; justify-content: center; gap: 2px; height: 15px; background: #2f3743; color: #dfe1e4; }
.modes svg { width: 11px; height: 11px; }
.modes .gfx { width: 15px; height: 15px; }
.modes .hl { margin-right: 1px; background: #5a8cc0; color: #fff; }
```
